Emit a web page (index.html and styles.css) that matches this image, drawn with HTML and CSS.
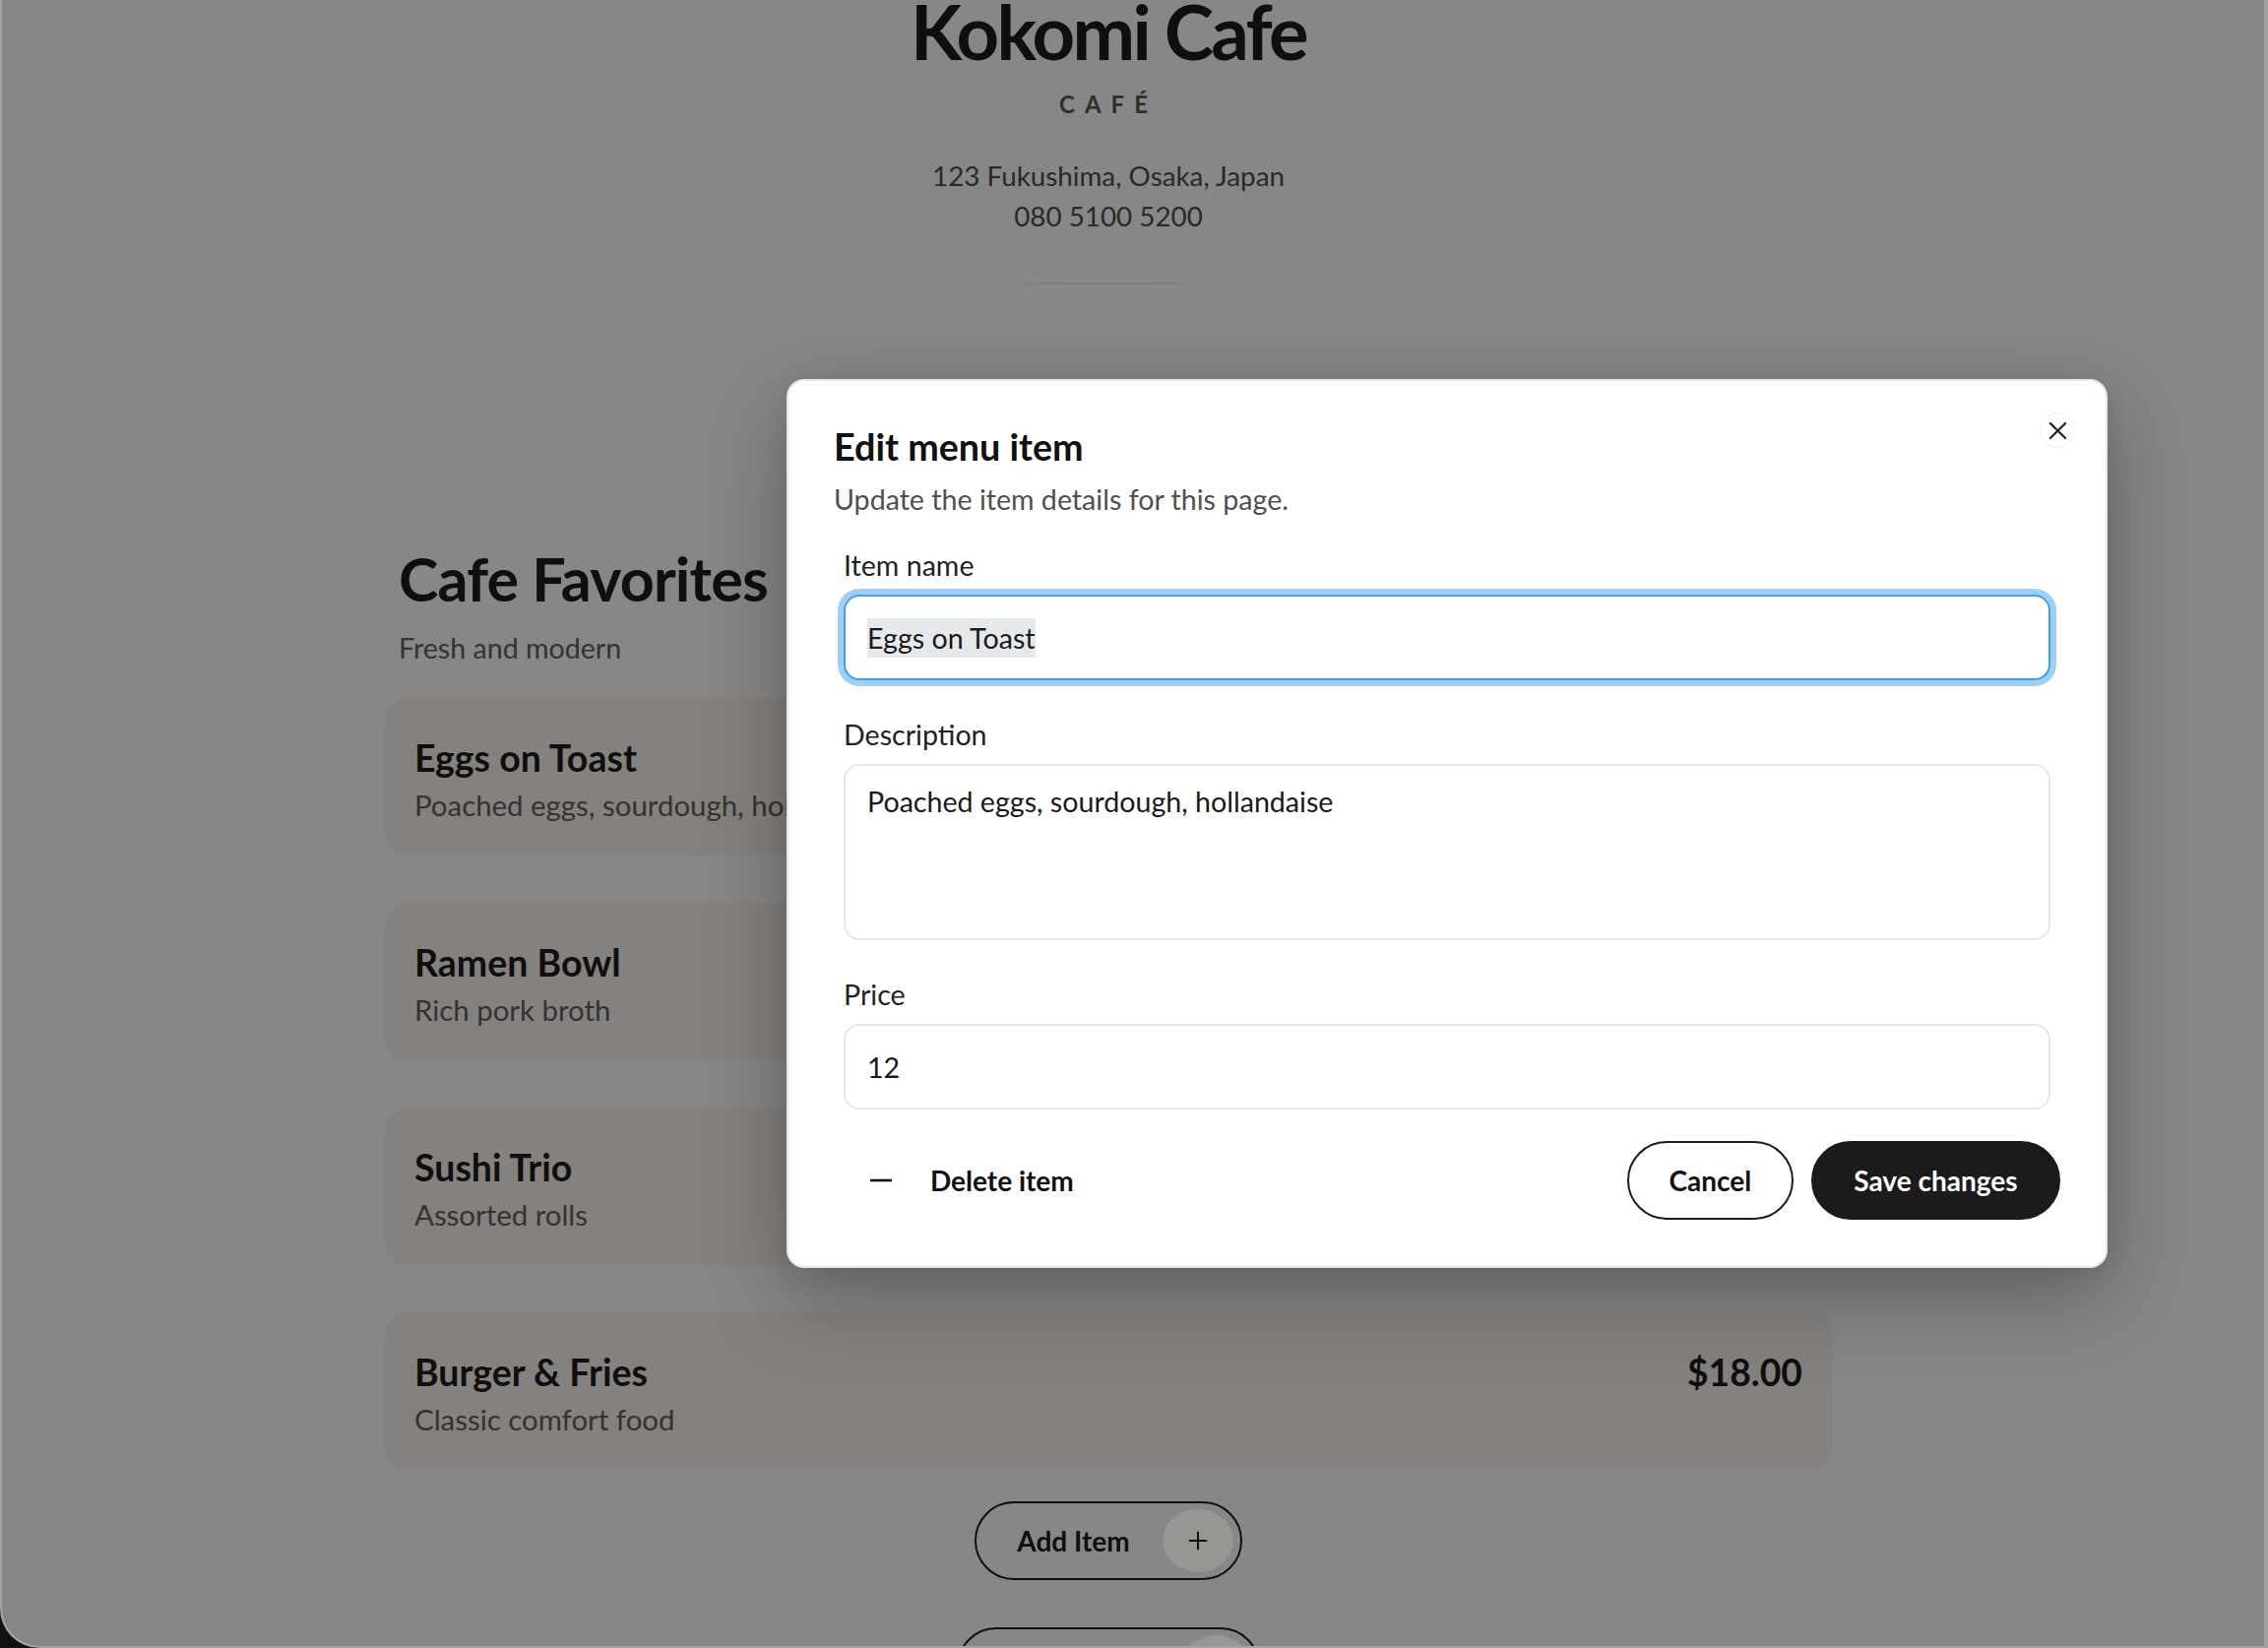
FILE: index.html
```html
<!DOCTYPE html>
<html lang="en">
<head>
<meta charset="utf-8">
<title>Kokomi Cafe – Edit menu item</title>
<link rel="stylesheet" href="styles.css">
</head>
<body>
<div class="frame">
  <main class="page">
    <header class="hero">
      <h1 class="brand">Kokomi Cafe</h1>
      <p class="kind">CAFÉ</p>
      <address class="contact">
        <span>123 Fukushima, Osaka, Japan</span>
        <span>080 5100 5200</span>
      </address>
      <hr class="rule">
    </header>

    <section class="menu">
      <div class="menu-head">
        <h2>Cafe Favorites</h2>
        <p>Fresh and modern</p>
      </div>
      <ul class="items">
        <li class="item">
          <div class="item-text"><h3>Eggs on Toast</h3><p>Poached eggs, sourdough, hollandaise</p></div>
          <span class="price">$12.00</span>
        </li>
        <li class="item">
          <div class="item-text"><h3>Ramen Bowl</h3><p>Rich pork broth</p></div>
          <span class="price">$16.00</span>
        </li>
        <li class="item">
          <div class="item-text"><h3>Sushi Trio</h3><p>Assorted rolls</p></div>
          <span class="price">$14.00</span>
        </li>
        <li class="item">
          <div class="item-text"><h3>Burger &amp; Fries</h3><p>Classic comfort food</p></div>
          <span class="price">$18.00</span>
        </li>
      </ul>
      <div class="page-actions">
        <button class="pill" type="button">Add Item
          <span class="pill-icon"><svg viewBox="0 0 24 24" width="22" height="22"><path d="M12 2v20M2 12h20" stroke="currentColor" stroke-width="2.2" fill="none"/></svg></span>
        </button>
        <button class="pill" type="button">Add Section
          <span class="pill-icon"><svg viewBox="0 0 24 24" width="22" height="22"><path d="M12 2v20M2 12h20" stroke="currentColor" stroke-width="2.2" fill="none"/></svg></span>
        </button>
      </div>
    </section>
  </main>

  <div class="overlay"></div>

  <div class="modal" role="dialog" aria-labelledby="modal-title">
    <button class="close" type="button" aria-label="Close">
      <svg viewBox="0 0 20 20" width="20" height="20"><path d="M2 2L18 18M18 2L2 18" stroke="currentColor" stroke-width="2.3" stroke-linecap="round" fill="none"/></svg>
    </button>
    <h2 class="modal-title" id="modal-title">Edit menu item</h2>
    <p class="modal-sub">Update the item details for this page.</p>
    <form class="form">
      <div class="field">
        <label class="label">Item name</label>
        <div class="input is-focused"><span class="sel">Eggs on Toast</span></div>
      </div>
      <div class="field">
        <label class="label">Description</label>
        <div class="input textarea">Poached eggs, sourdough, hollandaise</div>
      </div>
      <div class="field">
        <label class="label">Price</label>
        <div class="input">12</div>
      </div>
    </form>
    <div class="modal-actions">
      <button class="delete" type="button">
        <span class="del-icon"><svg viewBox="0 0 22 4" width="22" height="4"><path d="M0 2H22" stroke="currentColor" stroke-width="2.6" fill="none"/></svg></span>
        Delete item
      </button>
      <div class="btn-group">
        <button class="btn btn-outline" type="button">Cancel</button>
        <button class="btn btn-solid" type="button">Save changes</button>
      </div>
    </div>
  </div>
</div>
</body>
</html>
```

FILE: styles.css
```css
html, body {
  margin: 0;
  padding: 0;
}

body {
  background: #111111;
  font-family: Lato, "Noto Sans", "Liberation Sans", sans-serif;
  color: #1a1a1a;
}

button {
  font: inherit;
  color: inherit;
  cursor: pointer;
}

.frame {
  position: relative;
  height: 100vh;
  box-sizing: border-box;
  border-style: solid;
  border-color: #a3a3a3;
  border-width: 0 4px 2px 2px;
  border-bottom-left-radius: 40px;
  overflow: hidden;
  background: #e1e1e1;
}

/* ---------- page ---------- */
.page {
  display: flex;
  flex-direction: column;
  align-items: center;
  padding-right: 50px;
}

.hero {
  display: flex;
  flex-direction: column;
  align-items: center;
  text-align: center;
  margin-top: -6px;
}

.brand {
  margin: 0;
  font-size: 76px;
  line-height: 76px;
  font-weight: 700;
  letter-spacing: -2.7px;
  color: #1a1a1a;
}

.kind {
  margin: 18px 0 0;
  font-size: 24px;
  line-height: 36px;
  font-weight: 700;
  letter-spacing: 10px;
  color: #4d4d4d;
}

.contact {
  display: flex;
  flex-direction: column;
  margin-top: 34px;
  font-style: normal;
  font-size: 27.8px;
  line-height: 41px;
  color: #454545;
}

.rule {
  margin: 47px 0 0;
  width: 190px;
  height: 2px;
  border: 0;
  background: linear-gradient(90deg, rgba(200,200,200,0.2), #cfcfcf 30%, #cfcfcf 70%, rgba(200,200,200,0.2));
}

.menu {
  width: 1470px;
  margin-top: 262px;
}

.menu-head {
  padding: 0 14px;
}

.menu-head h2 {
  margin: 0;
  font-size: 61px;
  line-height: 73px;
  font-weight: 700;
  letter-spacing: -0.8px;
  color: #1a1a1a;
}

.menu-head p {
  margin: 14px 0 0;
  font-size: 28.6px;
  line-height: 40px;
  color: #555555;
}

.items {
  list-style: none;
  margin: 31px 0 0;
  padding: 0;
  display: flex;
  flex-direction: column;
  gap: 48px;
}

.item {
  display: flex;
  justify-content: space-between;
  align-items: flex-start;
  background: #ded7d2;
  border-radius: 24px;
  padding: 38px 30px 31.5px;
}

.item h3 {
  margin: 0;
  font-size: 37.5px;
  line-height: 46px;
  font-weight: 700;
  color: #1a1a1a;
}

.item p {
  margin: 4.5px 0 0;
  font-size: 29.4px;
  line-height: 40px;
  color: #555555;
}

.price {
  font-size: 37.3px;
  line-height: 46px;
  font-weight: 700;
  color: #1a1a1a;
}

.page-actions {
  display: flex;
  flex-direction: column;
  align-items: center;
  gap: 48px;
  margin-top: 32px;
}

.pill {
  display: inline-flex;
  align-items: center;
  gap: 33px;
  height: 80px;
  box-sizing: border-box;
  padding: 0 7px 0 41px;
  border: 2px solid #1a1a1a;
  border-radius: 999px;
  background: transparent;
  font-size: 28px;
  font-weight: 700;
  color: #1a1a1a;
}

.pill-icon {
  display: flex;
  align-items: center;
  justify-content: center;
  width: 72px;
  height: 64px;
  border-radius: 50%;
  background: #fdfbf6;
  color: #1a1a1a;
}

/* ---------- overlay + modal ---------- */
.overlay {
  position: absolute;
  inset: 0;
  background: rgba(0, 0, 0, 0.4);
}

.modal {
  position: absolute;
  left: 797px;
  top: 385px;
  width: 1342px;
  box-sizing: border-box;
  padding: 44px 46px 47px;
  background: #ffffff;
  border: 2px solid #e4e8eb;
  border-radius: 18px;
  box-shadow: 0 30px 90px rgba(0, 0, 0, 0.28), 0 8px 24px rgba(0, 0, 0, 0.08);
}

.close {
  position: absolute;
  top: 32px;
  right: 31px;
  width: 36px;
  height: 36px;
  padding: 0;
  display: flex;
  align-items: center;
  justify-content: center;
  border: 1px solid #eceff1;
  border-radius: 50%;
  background: #ffffff;
  color: #222222;
}

.close svg {
  width: 19px;
  height: 19px;
}

.modal-title {
  margin: 0;
  font-size: 37.7px;
  line-height: 45px;
  font-weight: 700;
  color: #111111;
}

.modal-sub {
  margin: 11px 0 0;
  font-size: 28.6px;
  line-height: 40px;
  color: #4f4f4f;
}

.form {
  margin-top: 27px;
  padding: 0 10px;
  display: flex;
  flex-direction: column;
  gap: 35px;
}

.field {
  display: flex;
  flex-direction: column;
}

.label {
  font-size: 28.6px;
  line-height: 40px;
  color: #222222;
}

.input {
  margin-top: 10px;
  height: 87px;
  box-sizing: border-box;
  display: flex;
  align-items: center;
  padding: 0 22px;
  border: 2px solid #e3e8eb;
  border-radius: 16px;
  background: #ffffff;
  font-size: 28.6px;
  line-height: 40px;
  color: #1a1a1a;
}

.input.is-focused {
  border-color: #3e9fea;
  box-shadow: 0 0 0 6px #9ed0f5;
}

.sel {
  background: #e6e9ec;
}

.input.textarea {
  height: 179px;
  align-items: flex-start;
  padding-top: 16px;
}

.modal-actions {
  margin-top: 32px;
  display: flex;
  justify-content: space-between;
  align-items: center;
}

.delete {
  display: inline-flex;
  align-items: center;
  gap: 28px;
  height: 80px;
  padding: 0 24px 0 26px;
  border: 0;
  background: transparent;
  font-size: 28px;
  font-weight: 700;
  color: #111111;
}

.del-icon {
  width: 44px;
  display: flex;
  justify-content: center;
}

.btn-group {
  display: flex;
  gap: 18px;
}

.btn {
  height: 80px;
  box-sizing: border-box;
  padding: 0 41.5px;
  border: 2px solid #1b1b1b;
  border-radius: 999px;
  font-size: 28px;
  font-weight: 700;
}

.btn-outline {
  padding: 0 40.5px;
  background: #ffffff;
  color: #111111;
}

.btn-solid {
  background: #1b1b1b;
  color: #ffffff;
}
```
